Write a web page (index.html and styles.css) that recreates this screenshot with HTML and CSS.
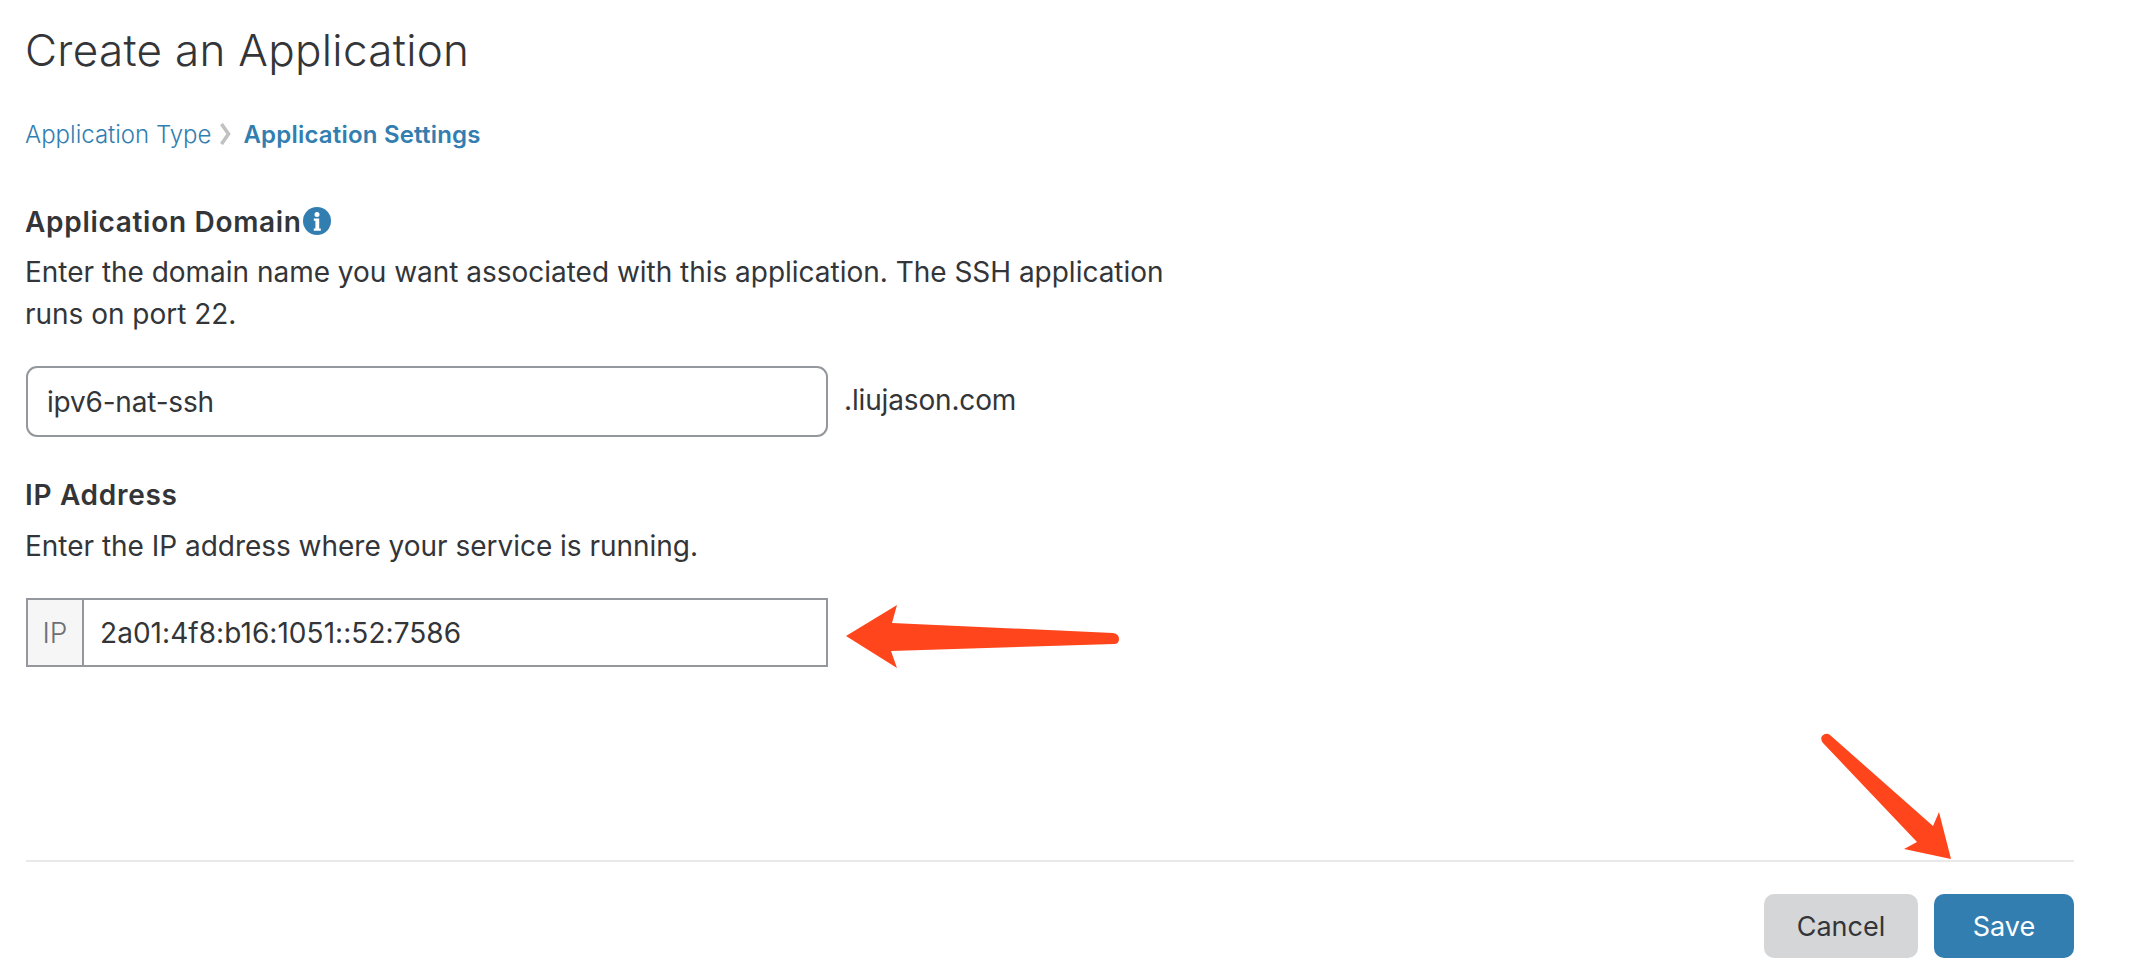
FILE: index.html
```html
<!DOCTYPE html>
<html lang="en">
<head>
<meta charset="utf-8">
<title>Create an Application</title>
<link rel="stylesheet" href="styles.css">
</head>
<body>
<main class="page">
  <h1 class="title">Create an Application</h1>
  <nav class="crumbs">
    <a class="crumb">Application Type</a>
    <svg class="chevron" viewBox="0 0 11 22" width="11" height="22"><path d="M1.5 1 L8.5 11 L1.5 21" fill="none" stroke="#c0c1c3" stroke-width="3.6"/></svg>
    <a class="crumb crumb-active">Application Settings</a>
  </nav>
  <section class="domain">
    <h2 class="label">Application Domain<svg class="info" viewBox="0 0 28 28" width="28" height="28"><circle cx="14" cy="14" r="14" fill="#327eb0"/><circle cx="14" cy="7.6" r="2.5" fill="#fff"/><path d="M10.8 11.6h5.4v10h1.6v2.2h-7v-2.2h1.6v-7.8h-1.6z" fill="#fff"/></svg></h2>
    <p class="desc">Enter the domain name you want associated with this application. The SSH application runs on port 22.</p>
    <div class="domain-row">
      <div class="field-round">ipv6-nat-ssh</div>
      <span class="suffix">.liujason.com</span>
    </div>
  </section>
  <section class="address">
    <h2 class="label">IP Address</h2>
    <p class="desc desc-short">Enter the IP address where your service is running.</p>
    <div class="ip-field">
      <span class="ip-tag">IP</span>
      <span class="ip-value">2a01:4f8:b16:1051::52:7586</span>
    </div>
  </section>
  <footer class="actions">
    <button class="btn btn-cancel">Cancel</button>
    <button class="btn btn-save">Save</button>
  </footer>
</main>
<svg class="marks" viewBox="0 0 2134 970" width="2134" height="970">
  <path fill="#ff451c" d="M846 636 L897 605 L892 623 L1113 633 Q1119 634 1119 639 Q1119 644 1114 644 L891 651 L897 668 Z"/>
  <path fill="#ff451c" d="M1951 859 L1904 849 L1917 842 L1823 743 Q1820 739 1822 736 Q1826 732 1830 735 L1933 826 L1939 812 Z"/>
</svg>
</body>
</html>
```
FILE: styles.css
```css
* { box-sizing: border-box; }
html, body { margin: 0; background: #fff; }
body {
  width: 2134px;
  height: 970px;
  overflow: hidden;
  position: relative;
  font-family: Inter, "Liberation Sans", sans-serif;
  color: #333538;
}
.page {
  padding: 22px 60px 0 25px;
  display: flex;
  flex-direction: column;
}
.title {
  margin: 0;
  font-size: 44px;
  line-height: 56px;
  font-weight: 350;
  letter-spacing: 0.3px;
}
.crumbs {
  display: flex;
  align-items: center;
  margin-top: 40px;
  height: 32px;
  font-size: 24px;
  color: #327eb0;
}
.crumb { font-weight: 350; letter-spacing: 0; }
.crumb-active { font-weight: 600; letter-spacing: 0.2px; }
.chevron { margin: 0 12px 0 9px; }
.domain { margin-top: 55px; }
.label {
  margin: 0;
  display: flex;
  align-items: center;
  font-size: 28px;
  line-height: 34px;
  font-weight: 600;
  letter-spacing: 0.7px;
}
.info { margin-top: -3px; margin-left: 1px; }
.desc {
  margin: 12px 0 0;
  width: 1160px;
  font-size: 28px;
  line-height: 42px;
  font-weight: 400;
  letter-spacing: -0.02px;
}
.desc-short { margin-top: 13px; }
.domain-row {
  display: flex;
  align-items: center;
  margin-top: 31px;
  padding-left: 1px;
}
.field-round {
  width: 802px;
  height: 71px;
  padding: 0 19px;
  display: flex;
  align-items: center;
  border: 2px solid #94989c;
  border-radius: 11px;
  font-size: 28px;
  letter-spacing: -0.2px;
}
.suffix { margin-left: 16px; font-size: 28px; letter-spacing: -0.15px; margin-top: -3px; }
.address { margin-top: 41px; }
.ip-field {
  display: flex;
  width: 802px;
  height: 69px;
  margin: 31px 0 0 1px;
  border: 2px solid #94989c;
  font-size: 28px;
}
.ip-tag {
  width: 56px;
  display: flex;
  align-items: center;
  justify-content: center;
  background: #f6f6f6;
  border-right: 2px solid #94989c;
  color: #6c6f73;
  font-weight: 350;
}
.ip-value { display: flex; align-items: center; padding-left: 16px; letter-spacing: 0.05px; }
.actions {
  position: absolute;
  top: 860px;
  left: 26px;
  width: 2048px;
  height: 98px;
  border-top: 2px solid #e9e9ea;
  display: flex;
  justify-content: flex-end;
  align-items: flex-end;
  gap: 16px;
}
.btn {
  height: 64px;
  border: 0;
  border-radius: 10px;
  font-family: inherit;
  font-size: 27px;
  font-weight: 400;
}
.btn-cancel { width: 154px; background: #d5d6d8; color: #333538; }
.btn-save { width: 140px; background: #327eb0; color: #fff; }
.marks { position: absolute; left: 0; top: 0; pointer-events: none; }
```
